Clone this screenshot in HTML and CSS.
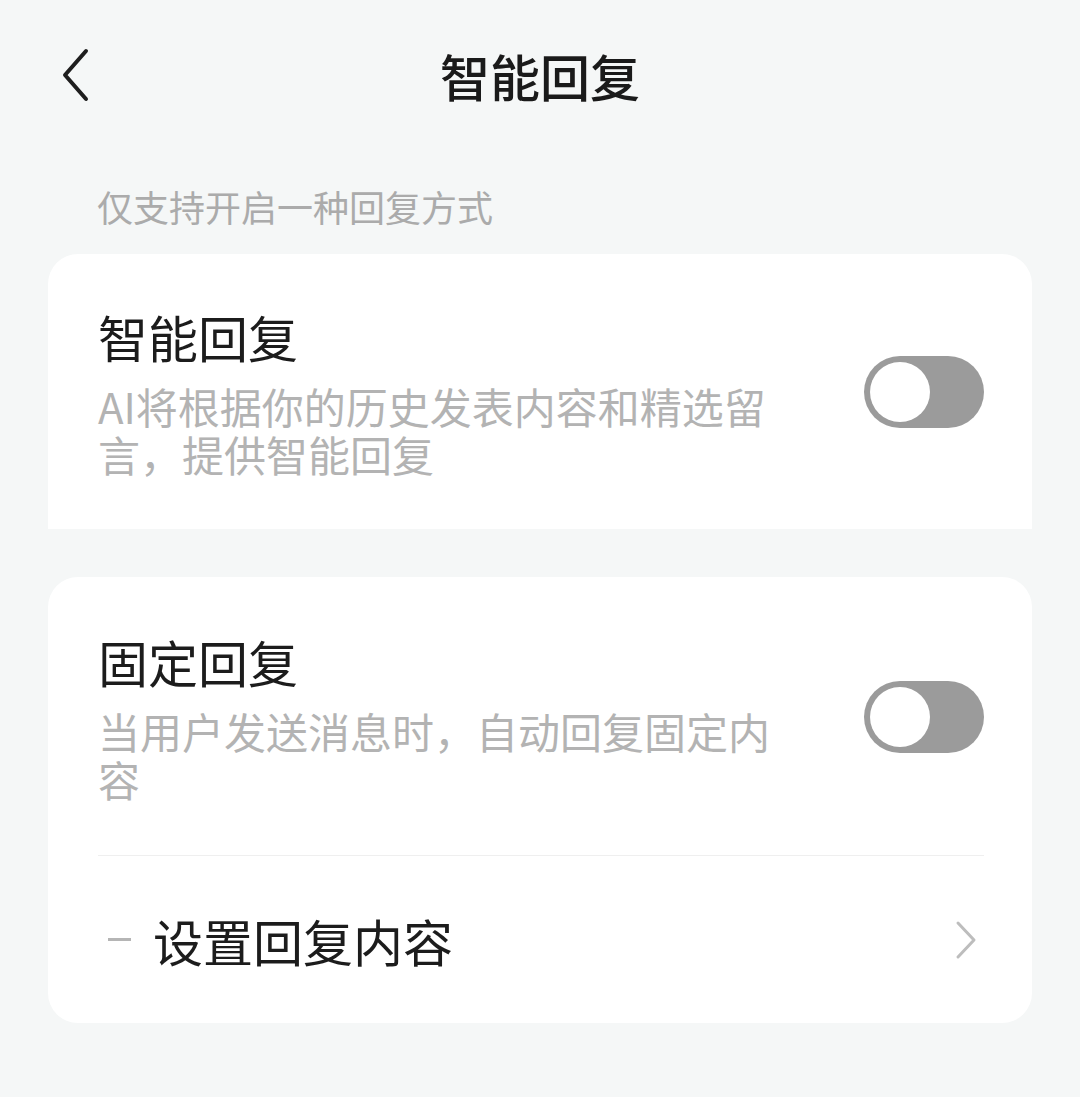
FILE: index.html
```html
<!DOCTYPE html>
<html lang="zh-CN">
<head>
  <meta charset="UTF-8">
  <title>智能回复</title>
  <link rel="stylesheet" href="styles.css">
</head>
<body>
  <div class="topbar">
    <div class="back">
      <svg width="32" height="54" viewBox="0 0 32 54">
        <polyline points="26,3 5,27 26,51" fill="none" stroke="#1e1e1e" stroke-width="4" stroke-linecap="round" stroke-linejoin="round"/>
      </svg>
    </div>
    <div class="title">智能回复</div>
    <div></div>
  </div>

  <div class="page">
    <div class="hint">仅支持开启一种回复方式</div>

    <div class="card card-top">
      <div class="option">
        <div class="text">
          <div class="name">智能回复</div>
          <div class="desc">AI将根据你的历史发表内容和精选留言，提供智能回复</div>
        </div>
        <div class="switch"><div class="knob"></div></div>
      </div>
    </div>

    <div class="card card-full">
      <div class="option option-fixed">
        <div class="text">
          <div class="name">固定回复</div>
          <div class="desc">当用户发送消息时，自动回复固定内容</div>
        </div>
        <div class="switch"><div class="knob"></div></div>
      </div>
      <div class="divider"></div>
      <div class="link-row">
        <span class="dash"></span>
        <span class="link-text">设置回复内容</span>
        <svg class="arrow" width="24" height="40" viewBox="0 0 24 40">
          <polyline points="4,3 20,20 4,37" fill="none" stroke="#bdbdbd" stroke-width="3" stroke-linecap="round" stroke-linejoin="round"/>
        </svg>
      </div>
    </div>
  </div>
</body>
</html>
```

FILE: styles.css
```css
body {
  margin: 0;
  background-color: #f5f7f7;
  font-family: "Noto Sans CJK SC", "Noto Sans", sans-serif;
  color: #1c1c1c;
}
.topbar {
  height: 150px;
  display: grid;
  grid-template-columns: 1fr auto 1fr;
  align-items: center;
}
.back {
  padding-left: 60px;
  display: flex;
  align-items: center;
}
.title {
  font-size: 50px;
  line-height: 60px;
  font-weight: 500;
  color: #1a1a1a;
}
.page {
  padding: 0 48px;
}
.hint {
  margin: 32px 0 24px;
  padding-left: 49px;
  font-size: 36px;
  line-height: 48px;
  color: #ababab;
}
.card {
  background-color: #ffffff;
  padding: 0 48px 0 50px;
}
.card-top {
  border-radius: 30px 30px 0 0;
  padding-top: 52px;
  padding-bottom: 51px;
}
.card-full {
  border-radius: 30px;
  margin-top: 48px;
}
.option {
  display: flex;
  align-items: center;
  justify-content: space-between;
}
.option-fixed {
  padding-top: 54px;
  padding-bottom: 52px;
}
.name {
  font-size: 50px;
  line-height: 60px;
}
.desc {
  max-width: 690px;
  margin-top: 16px;
  font-size: 42px;
  line-height: 48px;
  color: #b3b3b3;
}
.switch {
  width: 120px;
  height: 72px;
  box-sizing: border-box;
  padding: 6px;
  border-radius: 36px;
  background-color: #9b9b9b;
  display: flex;
  align-items: center;
}
.knob {
  width: 60px;
  height: 60px;
  border-radius: 50%;
  background-color: #ffffff;
}
.divider {
  height: 1px;
  background-color: #efefef;
}
.link-row {
  height: 167px;
  display: flex;
  align-items: center;
}
.dash {
  width: 23px;
  height: 3px;
  margin-left: 10px;
  margin-right: 22px;
  background-color: #b5b5b5;
}
.link-text {
  flex: 1;
  font-size: 50px;
  line-height: 60px;
}
.arrow {
  margin-right: 6px;
}
```
